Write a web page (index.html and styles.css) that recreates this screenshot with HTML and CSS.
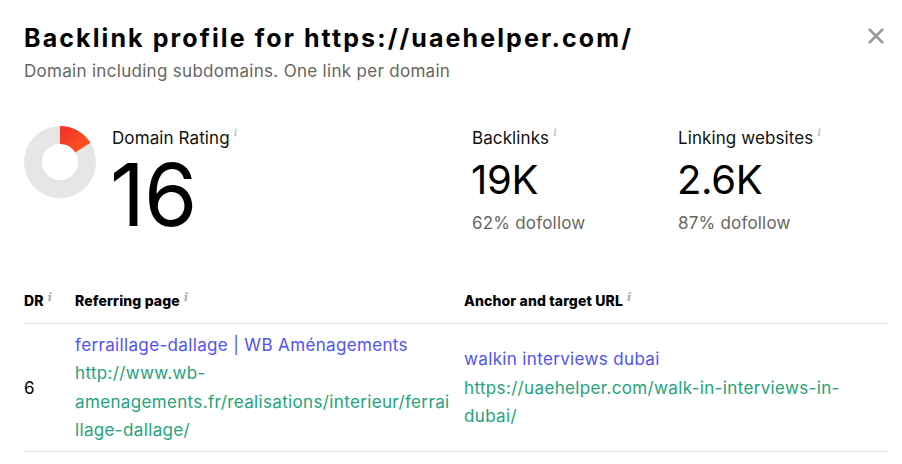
FILE: index.html
```html
<!DOCTYPE html>
<html lang="en">
<head>
<meta charset="utf-8">
<title>Backlink profile</title>
<link rel="stylesheet" href="styles.css">
</head>
<body>
<div class="panel">
  <div class="head">
    <div>
      <h1 class="title">Backlink profile for https://uaehelper.com/</h1>
      <p class="subtitle">Domain including subdomains. One link per domain</p>
    </div>
    <button class="close" aria-label="Close">
      <svg width="18" height="18" viewBox="0 0 18 18"><path d="M2 2 L16 16 M16 2 L2 16" stroke="#999" stroke-width="2.6" fill="none"/></svg>
    </button>
  </div>

  <div class="stats">
    <div class="dr">
      <svg class="donut" width="72" height="72" viewBox="0 0 72 72">
        <defs>
          <linearGradient id="g" x1="0" y1="0" x2="1" y2="1">
            <stop offset="0" stop-color="#f0302b"/>
            <stop offset="1" stop-color="#ff5a1f"/>
          </linearGradient>
        </defs>
        <circle cx="36" cy="36" r="27" fill="none" stroke="#e6e6e6" stroke-width="18"/>
        <path d="M36 0 A36 36 0 0 1 66.48 16.85 L51.24 26.44 A18 18 0 0 0 36 18 Z" fill="url(#g)"/>
      </svg>
      <div class="stat">
        <div class="label">Domain Rating<span class="info">i</span></div>
        <div class="big">16</div>
      </div>
    </div>
    <div class="stat">
      <div class="label">Backlinks<span class="info">i</span></div>
      <div class="value">19K</div>
      <div class="note">62% dofollow</div>
    </div>
    <div class="stat">
      <div class="label">Linking websites<span class="info">i</span></div>
      <div class="value">2.6K</div>
      <div class="note">87% dofollow</div>
    </div>
  </div>

  <div class="table">
    <div class="th">DR<span class="info">i</span></div>
    <div class="th">Referring page<span class="info">i</span></div>
    <div class="th">Anchor and target URL<span class="info">i</span></div>

    <div class="td dr-cell">6</div>
    <div class="td ref">
      <a class="link-title" href="#">ferraillage-dallage | WB Aménagements</a>
      <a class="link-url" href="#">http://www.wb-amenagements.fr/realisations/interieur/ferraillage-dallage/</a>
    </div>
    <div class="td anchor">
      <a class="link-title" href="#">walkin interviews dubai</a>
      <a class="link-url" href="#">https://uaehelper.com/walk-in-interviews-in-dubai/</a>
    </div>
  </div>
</div>
</body>
</html>
```
FILE: styles.css
```css
* { box-sizing: border-box; }
html, body { margin: 0; padding: 0; background: #fff; }
body {
  font-family: Inter, "Noto Sans", "DejaVu Sans", sans-serif;
  color: #111;
  width: 902px;
  height: 464px;
  overflow: hidden;
}
.panel { padding: 20px 14px 0 24px; }
.head { display: flex; justify-content: space-between; align-items: flex-start; }
.title {
  margin: 0;
  font-size: 25px;
  line-height: 36px;
  font-weight: 700;
  color: #000;
  letter-spacing: 2.1px;
}
.subtitle {
  margin: 5px 0 0;
  font-size: 17px;
  line-height: 20px;
  color: #666;
  letter-spacing: 0.3px;
}
.close {
  border: 0;
  background: none;
  padding: 0;
  margin: 7px 3px 0 0;
  width: 18px;
  height: 18px;
  display: flex;
}
.stats {
  display: grid;
  grid-template-columns: 448px 206px 1fr;
  margin-top: 45px;
}
.dr { display: flex; align-items: flex-start; gap: 16px; }
.donut { margin-top: 0; flex: none; }
.label {
  font-size: 17px;
  line-height: 24px;
  color: #111;
  letter-spacing: 0.1px;
}
.info {
  font-family: "DejaVu Serif", serif;
  font-style: italic;
  font-size: 11px;
  color: #aaa;
  vertical-align: top;
  margin-left: 4px;
  line-height: 14px;
}
.big {
  font-size: 86px;
  line-height: 80px;
  letter-spacing: -1px;
  color: #000;
  margin-top: 5px;
  margin-left: -2px;
}
.value {
  font-size: 40px;
  line-height: 48px;
  letter-spacing: -0.3px;
  color: #000;
  margin-top: 6px;
  margin-left: -1px;
}
.note {
  font-size: 17px;
  line-height: 24px;
  color: #666;
  margin-top: 7px;
  letter-spacing: 0.2px;
}
.table {
  display: grid;
  grid-template-columns: 51px 389px 424px;
  margin-top: 56px;
}
.th {
  font-size: 14px;
  font-weight: 800;
  line-height: 20px;
  padding-bottom: 12px;
  border-bottom: 1px solid #e4e4e4;
  color: #000;
  letter-spacing: 0.15px;
}
.td {
  border-bottom: 1px solid #e4e4e4;
  font-size: 17px;
  line-height: 28.4px;
  padding: 7px 0 6px;
}
.dr-cell { display: flex; align-items: center; color: #000; }
.ref { padding-right: 12px; }
.anchor { display: flex; flex-direction: column; justify-content: center; }
.link-title, .link-url {
  display: block;
  text-decoration: none;
  overflow-wrap: anywhere;
  letter-spacing: 0.35px;
}
.link-title { color: #4f52fb; }
.link-url { color: #23a37c; }
```
